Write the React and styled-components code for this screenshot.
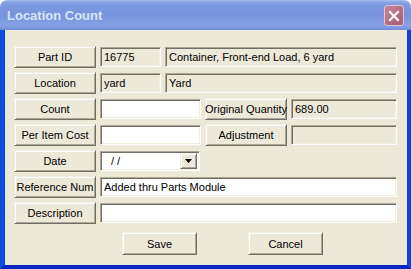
import React from "react";
import styled, { createGlobalStyle } from "styled-components";

const Global = createGlobalStyle`
  html, body { margin: 0; padding: 0; background: #ffffff; }
  body { font-family: "Liberation Sans", Arial, sans-serif; }
  * { box-sizing: border-box; }
`;

const Frame = styled.div`
  width: 411px;
  height: 269px;
  display: flex;
  flex-direction: column;
`;

const TitleBar = styled.div`
  height: 30px;
  flex: none;
  display: flex;
  align-items: center;
  justify-content: space-between;
  padding: 0 7px 0 7px;
  border-radius: 7px 7px 0 0;
  background: linear-gradient(
    to bottom,
    #a9bff0 0px,
    #8aa5e8 2px,
    #7c98e0 5px,
    #7894de 14px,
    #7d99e0 20px,
    #87a2e5 25px,
    #7d98df 28px,
    #6d88d6 30px
  );
`;

const Title = styled.span`
  font-family: "Liberation Sans", Arial, sans-serif;
  font-weight: 700;
  font-size: 13px;
  color: #d8e4f8;
  margin-top: 1px;
`;

const CloseBox = styled.div`
  width: 20px;
  height: 21px;
  margin-top: 1px;
  border: 1px solid #e0c6d2;
  border-radius: 3px;
  background: linear-gradient(135deg, #c9879a 0%, #b06a80 60%, #a56078 100%);
  display: flex;
  align-items: center;
  justify-content: center;
`;

const Body = styled.div`
  flex: 1;
  display: flex;
  flex-direction: column;
  background: #ece9d8;
  border-left: 4px solid #0a4fe2;
  border-right: 4px solid #0a44d8;
  border-bottom: 4px solid #0029c4;
  box-shadow: inset 1px 0 #0a3fd0;
  padding: 16px 10px 0 10px;
`;

const Rows = styled.div`
  display: flex;
  flex-direction: column;
  gap: 4px;
`;

const Row = styled.div`
  display: flex;
  align-items: center;
  gap: 4px;
  height: 22px;
`;

const raised = `
  border: 1px solid;
  border-color: #f1efe2 #716f64 #716f64 #f1efe2;
  box-shadow: inset 1px 1px #ffffff, inset -1px -1px #aca899;
  background: #ece9d8;
`;

const LabelButton = styled.div`
  ${raised}
  width: ${(p) => p.$w || 82}px;
  height: 22px;
  flex: none;
  display: flex;
  align-items: center;
  justify-content: center;
  font-size: 11px;
  color: #000;
  white-space: nowrap;
`;

const Field = styled.div`
  height: 20px;
  width: ${(p) => (p.$w ? p.$w + "px" : "auto")};
  flex: ${(p) => (p.$w ? "none" : "1")};
  border: 1px solid;
  border-color: #aca899 #ffffff #ffffff #aca899;
  box-shadow: inset 1px 1px #716f64, inset -1px -1px #f1efe2;
  background: ${(p) => (p.$white ? "#ffffff" : "#ece9d8")};
  display: flex;
  align-items: center;
  padding: 0 3px;
  font-size: 11px;
  color: #000;
  white-space: nowrap;
  overflow: hidden;
`;

const Combo = styled(Field)`
  padding: 0 2px 0 10px;
  justify-content: space-between;
`;

const DropButton = styled.div`
  ${raised}
  width: 17px;
  height: 16px;
  display: flex;
  align-items: center;
  justify-content: center;
`;

const Footer = styled.div`
  display: flex;
  justify-content: flex-start;
  gap: 51px;
  margin-top: 8px;
  padding-left: 108px;
`;

const PushButton = styled.div`
  ${raised}
  width: 75px;
  height: 23px;
  display: flex;
  align-items: center;
  justify-content: center;
  font-size: 11px;
  color: #000;
`;

export default function App() {
  return (
    <>
      <Global />
      <Frame>
        <TitleBar>
          <Title>Location Count</Title>
          <CloseBox>
            <svg width="12" height="12" viewBox="0 0 12 12">
              <path d="M2 2 L10 10 M10 2 L2 10" stroke="#fff" strokeWidth="2.2" strokeLinecap="square" />
            </svg>
          </CloseBox>
        </TitleBar>
        <Body>
          <Rows>
            <Row>
              <LabelButton>Part ID</LabelButton>
              <Field $w={61}>16775</Field>
              <Field>Container, Front-end Load, 6 yard</Field>
            </Row>
            <Row>
              <LabelButton>Location</LabelButton>
              <Field $w={61}>yard</Field>
              <Field>Yard</Field>
            </Row>
            <Row>
              <LabelButton>Count</LabelButton>
              <Field $w={101} $white />
              <LabelButton>Original Quantity</LabelButton>
              <Field>689.00</Field>
            </Row>
            <Row>
              <LabelButton>Per Item Cost</LabelButton>
              <Field $w={101} $white />
              <LabelButton>Adjustment</LabelButton>
              <Field />
            </Row>
            <Row>
              <LabelButton>Date</LabelButton>
              <Combo $w={100} $white>
                <span>/ /</span>
                <DropButton>
                  <svg width="7" height="4" viewBox="0 0 7 4">
                    <path d="M0 0 H7 L3.5 4 Z" fill="#000" />
                  </svg>
                </DropButton>
              </Combo>
            </Row>
            <Row>
              <LabelButton>Reference Num</LabelButton>
              <Field $white>Added thru Parts Module</Field>
            </Row>
            <Row>
              <LabelButton>Description</LabelButton>
              <Field $white />
            </Row>
          </Rows>
          <Footer>
            <PushButton>Save</PushButton>
            <PushButton>Cancel</PushButton>
          </Footer>
        </Body>
      </Frame>
    </>
  );
}
